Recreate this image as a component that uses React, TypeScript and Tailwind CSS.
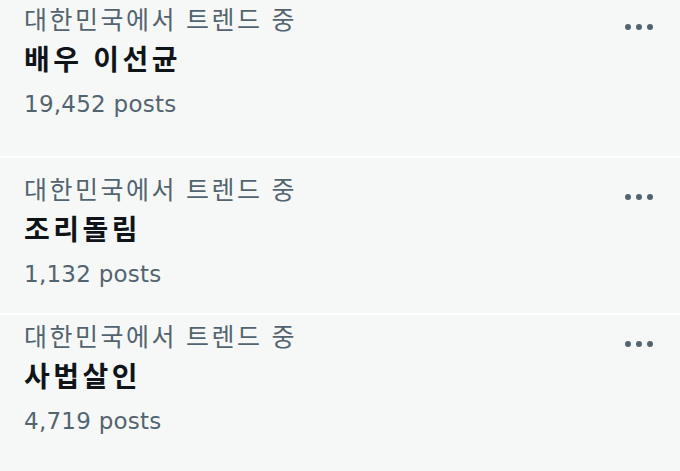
import React from "react";

const items = [
  { title: "배우 이선균", posts: "19,452 posts", pad: "pt-[4px]", h: "h-[156px]" },
  { title: "조리돌림", posts: "1,132 posts", pad: "pt-[16px]", h: "h-[155px]" },
  { title: "사법살인", posts: "4,719 posts", pad: "pt-[6px]", h: "h-[156px]" },
];

function Dots() {
  return (
    <svg width="32" height="8" viewBox="0 0 32 8" className="text-[#536471]">
      <circle cx="4" cy="4" r="3" fill="currentColor" />
      <circle cx="15" cy="4" r="3" fill="currentColor" />
      <circle cx="26" cy="4" r="3" fill="currentColor" />
    </svg>
  );
}

export default function App() {
  return (
    <div className="w-[680px] h-[471px] overflow-hidden bg-white flex flex-col gap-[2px] font-['Noto_Sans','Noto_Sans_CJK_KR',sans-serif]">
      {items.map((it, i) => (
        <div key={i} className={`${it.h} ${it.pad} shrink-0 bg-[#f6f8f8] flex justify-between pl-6 pr-[24px]`}>
          <div className="flex flex-col">
            <div className="text-[25px] leading-[30px] text-[#536471] tracking-[2.5px]">대한민국에서 트렌드 중</div>
            <div className="mt-[8px] text-[28px] leading-[34px] font-bold text-[#0f1419] tracking-[3.5px]">{it.title}</div>
            <div className="mt-[13px] text-[23px] leading-[30px] text-[#536471] tracking-[0.25px] font-['DejaVu_Sans',sans-serif]">{it.posts}</div>
          </div>
          <div className="pt-[19px]">
            <Dots />
          </div>
        </div>
      ))}
    </div>
  );
}
